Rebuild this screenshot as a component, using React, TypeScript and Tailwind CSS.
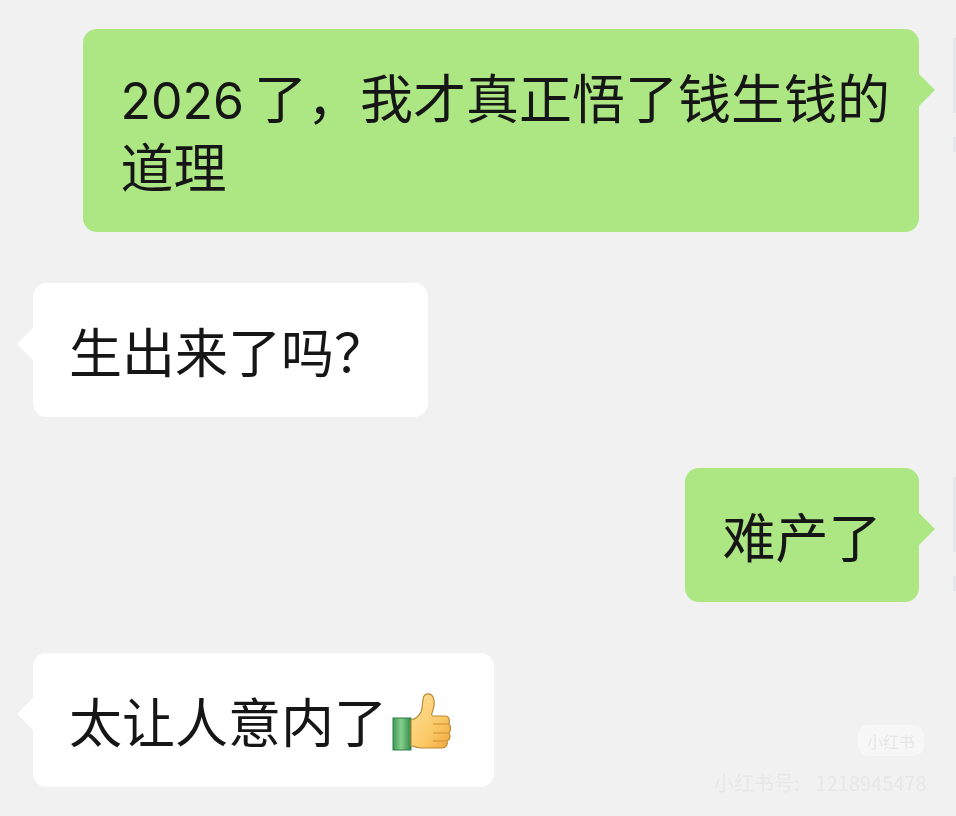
import React from "react";

const font = { fontFamily: '"Noto Sans CJK SC", "Noto Sans", sans-serif' };

function Thumb() {
  return (
    <svg width="62" height="62" viewBox="0 0 62 62" className="mt-[4px] inline-block shrink-0">
      <defs>
        <linearGradient id="skin" x1="0" y1="0" x2="1" y2="1">
          <stop offset="0" stopColor="#fde09a" />
          <stop offset="0.6" stopColor="#fbca68" />
          <stop offset="1" stopColor="#f0a63a" />
        </linearGradient>
        <linearGradient id="cuff" x1="0" y1="0" x2="1" y2="0">
          <stop offset="0" stopColor="#3c9c55" />
          <stop offset="0.45" stopColor="#86cf8d" />
          <stop offset="1" stopColor="#2f8a49" />
        </linearGradient>
      </defs>
      <rect x="2" y="26" width="18" height="32" fill="url(#cuff)" stroke="#2f7d44" strokeWidth="1" />
      <path
        d="M20 28 C24 27 28 24 30 20 C32 15 31 8 33 4 C35 1 40 1 42 5 C44 9 43 16 41 21 C40 23 41 24 43 24 L54 24 C58 24 59 28 58 32 C60 34 60 39 58 41 C60 44 59 48 56 49 C57 53 55 56 51 56 L30 56 C26 56 23 54 20 54 Z"
        fill="url(#skin)"
        stroke="#b98a35"
        strokeWidth="1.2"
      />
      <path d="M42 32 H58 M42 41 H58 M42 49 H56" stroke="#dd9f3f" strokeWidth="1.6" fill="none" />
    </svg>
  );
}

function Sliver({ h, className }: { h: number; className: string }) {
  return <div className={`absolute left-[calc(100%+34px)] w-[3px] bg-[#e4e6ea] ${className}`} style={{ height: h }} />;
}

function Sent({ children, className = "" }: { children: React.ReactNode; className?: string }) {
  return (
    <div className="flex justify-end pr-[37px]">
      <div className={`relative rounded-[14px] bg-[#ace783] pl-[37.5px] pr-[37.5px] pt-[33px] pb-[32px] ${className}`}>
        {children}
        <div className="absolute left-full top-[61px] ml-[-1px] h-0 w-0 -translate-y-1/2 border-y-[17px] border-l-[17px] border-y-transparent border-l-[#ace783]" />
        <Sliver h={75} className="top-[9px]" />
        <Sliver h={15} className="top-[108px]" />
      </div>
    </div>
  );
}

function Received({ children }: { children: React.ReactNode }) {
  return (
    <div className="flex justify-start pl-[33px]">
      <div className="relative flex items-center rounded-[14px] bg-white pl-[36px] pr-[41px] pt-[33px] pb-[32px]">
        {children}
        <div className="absolute right-full top-[61px] mr-[-1px] h-0 w-0 -translate-y-1/2 border-y-[17px] border-r-[17px] border-y-transparent border-r-white" />
      </div>
    </div>
  );
}

export default function App() {
  return (
    <div
      style={font}
      className="relative flex h-[816px] w-[956px] flex-col gap-[51px] overflow-hidden bg-[#f1f1f1] pt-[29px] text-[53px] leading-[69px] text-[#161616]"
    >
      <Sent className="w-[836px]">
        <div className="h-[69px] whitespace-nowrap">
          <span className="mr-[10px] font-['Inter'] text-[50px] leading-none font-normal">2026</span>
          {"了\uFF0C我才真正悟了钱生钱的"}
        </div>
        <div className="h-[69px]">道理</div>
      </Sent>
      <Received>
        <span>{"生出来了吗\uFF1F"}</span>
      </Received>
      <Sent>
        <span>难产了</span>
      </Sent>
      <Received>
        <span className="whitespace-nowrap">太让人意内了</span>
        <span className="ml-[4px] flex h-[69px] items-center">
          <Thumb />
        </span>
      </Received>
      <div className="absolute left-[858px] top-[725px] flex h-[31px] w-[66px] items-center justify-center rounded-[10px] bg-[#f7f7f7] text-[16px] leading-none text-[#e6e6e6] blur-[0.5px]">
        小红书
      </div>
      <div className="absolute left-[714px] top-[771px] whitespace-nowrap text-[20px] leading-[24px] text-[#e7e7e7] blur-[0.6px]">
        小红书号:<span className="ml-[16px]">1218945478</span>
      </div>
    </div>
  );
}
